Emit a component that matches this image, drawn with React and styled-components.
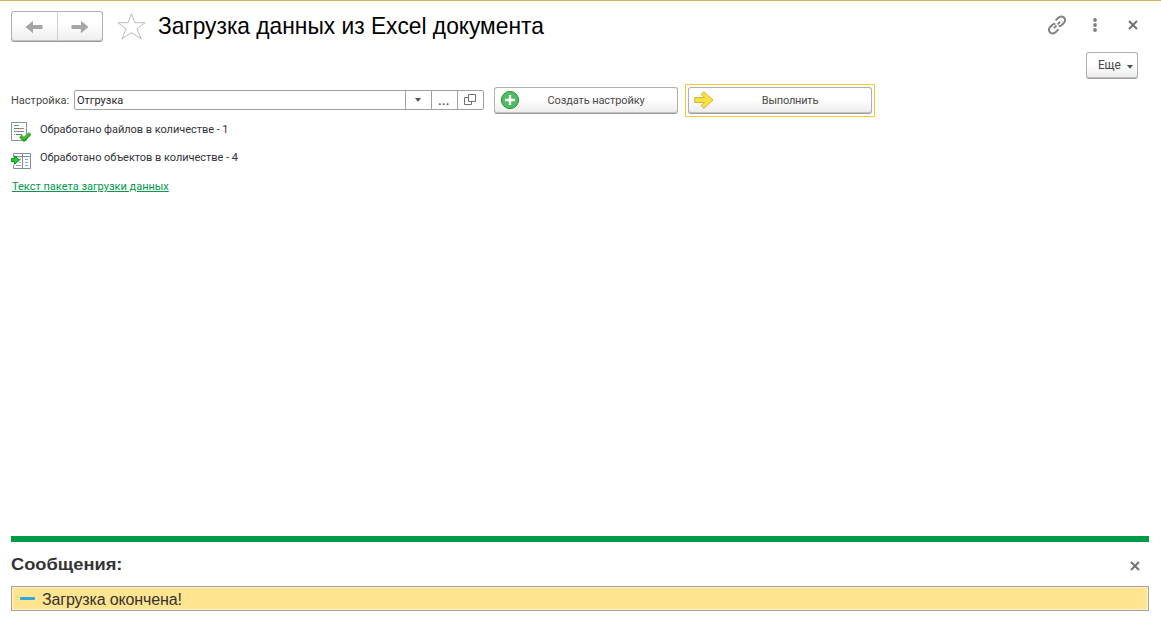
import React from 'react';
import styled, { createGlobalStyle } from 'styled-components';

const GlobalStyle = createGlobalStyle`
  * { box-sizing: border-box; }
  body { margin: 0; background: #fff; overflow: hidden; }
  button, input { font: inherit; color: inherit; margin: 0; }
  svg { display: block; flex: none; }
`;

const Window = styled.div`
  display: flex;
  flex-direction: column;
  width: 100%;
  height: 622px;
  border-top: 1px solid #c9b866;
  background: #fff;
  color: #484848;
  font: 11px/14px Roboto, "Liberation Sans", sans-serif;
  white-space: nowrap;
`;

const Header = styled.header`
  display: flex;
  align-items: flex-start;
  height: 51px;
  padding: 10px 23px 0 11px;
`;

const NavGroup = styled.div`
  display: flex;
  width: 92px;
  height: 31px;
  border: 1px solid #b0b0b0;
  border-bottom-color: #989898;
  border-radius: 3px;
  background: linear-gradient(#fff 40%, #ededed);
  box-shadow: inset 0 -1px #c4c4c4;
`;

const NavButton = styled.button`
  display: flex;
  align-items: center;
  justify-content: center;
  flex: 1;
  padding: 0;
  border: 0;
  background: none;
  & + & { border-left: 1px solid #d0d0d0; }
`;

const Star = styled.div`
  margin: 1px 0 0 14px;
`;

const Title = styled.h1`
  flex: 1;
  margin: 1px 0 0 12px;
  color: #000;
  font: 400 24px/28px "Liberation Sans", Arial, sans-serif;
  transform: scaleX(0.948);
  transform-origin: left;
`;

const WindowTools = styled.div`
  display: flex;
  align-items: center;
  height: 28px;
`;

const ToolButton = styled.button`
  display: flex;
  padding: 0;
  border: 0;
  background: none;
  margin-left: ${(p) => p.$gap || 0}px;
`;

const CommandBar = styled.div`
  display: flex;
  justify-content: flex-end;
  height: 34px;
  padding-right: 23px;
`;

const Button = styled.button`
  display: flex;
  align-items: center;
  width: ${(p) => p.$width}px;
  height: 27px;
  padding: 0 5px;
  border: 1px solid #b0b0b0;
  border-bottom-color: #9a9a9a;
  border-radius: 3px;
  background: linear-gradient(#fff 45%, #ececec);
  box-shadow: inset 0 -1px #c4c4c4;
`;

const MoreButton = styled(Button)`
  gap: 6px;
  padding: 0 6px 1px 11px;
  font-size: 12px;
  letter-spacing: -0.2px;
  svg { margin-top: 3px; }
`;

const ButtonLabel = styled.span`
  flex: 1;
  padding-top: 2px;
  text-align: center;
  letter-spacing: ${(p) => p.$spacing || 0}px;
`;

const SettingsRow = styled.div`
  display: flex;
  align-items: center;
  height: 32px;
  margin-top: -2px;
  padding-left: 11px;
`;

const FieldLabel = styled.label`
  width: 63px;
  padding-top: 1px;
`;

const Field = styled.div`
  display: flex;
  width: 410px;
  height: 20px;
  border: 1px solid #a0a0a0;
  border-radius: 2px;
`;

const FieldValue = styled.div`
  flex: 1;
  padding: 3px 0 0 2px;
  color: #262626;
`;

const FieldButton = styled.button`
  display: flex;
  align-items: center;
  justify-content: center;
  width: 26px;
  padding: 0 1px 0 0;
  border: 0;
  border-left: 1px solid #a0a0a0;
  background: none;
`;

const Ellipsis = styled.span`
  padding-top: 4px;
  font-weight: 700;
  letter-spacing: 0.6px;
`;

const CreateSlot = styled.div`
  margin-left: 10px;
`;

const DefaultFrame = styled.div`
  margin-left: 7px;
  padding: 2px;
  border: 1px solid #f8cb2e;
`;

const Results = styled.div`
  flex: 1;
  padding: 5px 0 0 11px;
`;

const ResultRow = styled.div`
  display: flex;
  height: ${(p) => p.$height}px;
  gap: 9px;
`;

const ResultText = styled.span`
  padding-top: 2px;
  color: #33333b;
  letter-spacing: -0.04px;
`;

const IconSlot = styled.span`
  padding-top: ${(p) => p.$top}px;
`;

const PackageLink = styled.a`
  display: block;
  width: max-content;
  margin: 2px 0 0 1px;
  color: #009a48;
  text-decoration: underline;
`;

const Messages = styled.section`
  height: 86px;
  margin: 0 12px 0 11px;
  border-top: 6px solid #009b48;
`;

const MessagesHeader = styled.div`
  display: flex;
  align-items: center;
  justify-content: space-between;
  height: 44px;
  padding-right: 9px;
`;

const MessagesTitle = styled.h2`
  margin: 2px 0 0;
  color: #333;
  font: 700 17px/20px "Liberation Sans", Arial, sans-serif;
  transform: scaleX(1.075);
  transform-origin: left;
`;

const CloseSlot = styled.div`
  padding-top: 4px;
`;

const Message = styled.div`
  display: flex;
  align-items: center;
  height: 25px;
  padding-left: 8px;
  gap: 7px;
  border: 1px solid #a0a0a0;
  background: #ffe590;
  box-shadow: inset 0 0 0 1px #fff3cf;
  color: #333;
  font: 16px/20px "Liberation Sans", Arial, sans-serif;
`;

const Dash = styled.i`
  width: 15px;
  height: 3px;
  margin-bottom: 1px;
  border-radius: 1px;
  background: #29abe2;
`;

const MessageText = styled.span`
  padding-top: 2px;
  letter-spacing: -0.15px;
`;

const Arrow = ({ right }) => (
  <svg width="18" height="14" viewBox="0 0 18 14">
    <path d="M.5 7 8 .8V5h9.5v4H8v4.2z" fill="#a6a6a6" transform={right ? 'rotate(180 9 7)' : undefined} />
  </svg>
);

const Close = () => (
  <svg width="10" height="10" viewBox="0 0 10 10">
    <path d="M1 1l8 8M9 1 1 9" stroke="#737373" strokeWidth="2" />
  </svg>
);

const Caret = ({ width = 6 }) => (
  <svg width={width} height="4" viewBox="0 0 6 4"><path d="M0 0h6L3 3.7z" fill="#505050" /></svg>
);

const StarIcon = () => (
  <svg width="29" height="28" viewBox="0 0 29 28">
    <path d="m14.5 1.5 3.3 9.2h10.3l-8.2 6.2 4.3 9.9-9.7-6.2-9.7 6.2 4.3-9.9L.9 10.7h10.3z" fill="none" stroke="#b7bec4" />
  </svg>
);

const LinkIcon = () => (
  <svg width="20" height="20" viewBox="0 0 20 20" fill="none" stroke="#808080" strokeWidth="2">
    <path d="m8.6 5.4 2.6-2.5c2-1.8 4.2-1.7 5.7-.3s1.600 3.700-.1 5.400l-2.800 2.700-2.300.5M11.400 14.400l-2.600 2.700c-2 1.800-4.200 1.700-5.700.3s-1.600-3.700.1-5.400L6 9.300l2.300-.5M6.900 13.100l2.500-2.500M10.600 9.400l2.500-2.500" />
  </svg>
);

const DotsIcon = () => (
  <svg width="4" height="14" viewBox="0 0 4 14" fill="#808080">
    <circle cx="2" cy="2" r="1.9" /><circle cx="2" cy="7" r="1.9" /><circle cx="2" cy="12" r="1.9" />
  </svg>
);

const OpenIcon = () => (
  <svg width="12" height="12" viewBox="0 0 12 12" fill="none" stroke="#707070">
    <path d="M4.5.5h7v7h-7zM4.500 3.500h-4v7h7v-3" />
  </svg>
);

const PlusIcon = () => (
  <svg width="20" height="20" viewBox="0 0 20 20">
    <circle cx="10" cy="10" r="8.6" fill="#50bc62" stroke="#299638" />
    <path d="M10 5v10M5 10h10" stroke="#fff" strokeWidth="2.3" />
  </svg>
);

const RunIcon = () => (
  <svg width="20" height="18" viewBox="0 0 20 18">
    <path d="M.8 6.500h9.500L7.200 3.300 9.800.8 19 9l-9.200 8.200-2.600-2.500 3.100-3.200H.8z" fill="#f6e343" stroke="#d4b62f" strokeLinejoin="round" />
  </svg>
);

const DocumentIcon = () => (
  <svg width="20" height="20" viewBox="0 0 20 20" fill="none">
    <path d="M.5.5h15v18H.5z" fill="#fff" stroke="#8794a4" />
    <path d="M3 3.500h5M3 9.500h3M9 9.500h4" stroke="#5b93b8" />
    <path d="M8 6.500h5M5 9.500h4M3 12.500h1" stroke="#e26a5c" />
    <path d="M3 6.500h5M5 12.500h6" stroke="#4b8f87" />
    <path d="m9.500 14 3.500 3.600 6-6.200" stroke="#259b19" strokeWidth="3.600" />
    <path d="m9.800 13.800 3.200 3.100 5.600-5.800" stroke="#4fbd35" strokeWidth="1.800" />
  </svg>
);

const ImportIcon = () => (
  <svg width="20" height="17" viewBox="0 0 20 17" fill="none">
    <path d="M2.500 4V.5h17v15h-17V12" fill="#fff" stroke="#8090a2" />
    <path d="M11.500 1v14M3 3.500h16" stroke="#8090a2" />
    <path d="M8 6.500h2M8 9.500h2M5 12.500h5M14 6.500h3M14 9.500h3M14 12.500h3" stroke="#93a9b7" />
    <path d="M.5 5.500h3V2.800L8.600 7l-5.100 4.200V8.500h-3z" fill="#1fd32c" stroke="#148a1b" />
  </svg>
);

export default function App() {
  return (
    <>
      <GlobalStyle />
      <Window>
        <Header>
          <NavGroup>
            <NavButton aria-label="Назад"><Arrow /></NavButton>
            <NavButton aria-label="Вперед"><Arrow right /></NavButton>
          </NavGroup>
          <Star><StarIcon /></Star>
          <Title>Загрузка данных из Excel документа</Title>
          <WindowTools>
            <ToolButton><LinkIcon /></ToolButton>
            <ToolButton $gap={26}><DotsIcon /></ToolButton>
            <ToolButton $gap={31}><Close /></ToolButton>
          </WindowTools>
        </Header>
        <CommandBar>
          <MoreButton $width={52}>Еще<Caret /></MoreButton>
        </CommandBar>
        <SettingsRow>
          <FieldLabel>Настройка:</FieldLabel>
          <Field>
            <FieldValue>Отгрузка</FieldValue>
            <FieldButton><Caret /></FieldButton>
            <FieldButton><Ellipsis>...</Ellipsis></FieldButton>
            <FieldButton><OpenIcon /></FieldButton>
          </Field>
          <CreateSlot>
            <Button $width={184}><PlusIcon /><ButtonLabel $spacing={-0.1}>Создать настройку</ButtonLabel></Button>
          </CreateSlot>
          <DefaultFrame>
            <Button $width={184}><RunIcon /><ButtonLabel $spacing={-0.2}>Выполнить</ButtonLabel></Button>
          </DefaultFrame>
        </SettingsRow>
        <Results>
          <ResultRow $height={28}>
            <IconSlot $top={1}><DocumentIcon /></IconSlot>
            <ResultText>Обработано файлов в количестве - 1</ResultText>
          </ResultRow>
          <ResultRow $height={29}>
            <IconSlot $top={4}><ImportIcon /></IconSlot>
            <ResultText>Обработано объектов в количестве - 4</ResultText>
          </ResultRow>
          <PackageLink>Текст пакета загрузки данных</PackageLink>
        </Results>
        <Messages>
          <MessagesHeader>
            <MessagesTitle>Сообщения:</MessagesTitle>
            <CloseSlot><Close /></CloseSlot>
          </MessagesHeader>
          <Message><Dash /><MessageText>Загрузка окончена!</MessageText></Message>
        </Messages>
      </Window>
    </>
  );
}
